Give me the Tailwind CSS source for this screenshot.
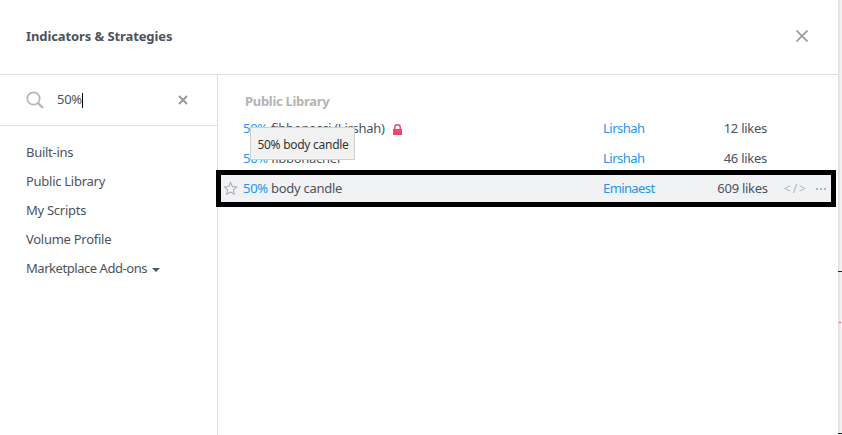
<!DOCTYPE html>
<html lang="en">
  <head>
    <meta charset="UTF-8" />
    <title>Indicators &amp; Strategies</title>
    <script src="https://cdn.jsdelivr.net/npm/@tailwindcss/browser@4"></script>
  </head>
  <body class="bg-white overflow-hidden font-['Noto_Sans',sans-serif] text-[13px] tracking-[-0.27px] text-[#4c525e]">
    <div class="flex h-[435px] w-[842px]">
      <!-- Dialog -->
      <div class="flex flex-col w-[838px]">
        <!-- Header -->
        <div class="flex items-center justify-between h-[75px] shrink-0 pl-[26px] pr-[30px] border-b border-[#e0e0e0]">
          <h1 class="text-[13px] font-bold tracking-[-0.1px] text-[#4c525e] -mt-px">Indicators &amp; Strategies</h1>
          <button class="text-[#9a9a9a] -mt-[2px]">
            <svg width="12" height="12" viewBox="0 0 12 12" fill="none" stroke="currentColor" stroke-width="1.600" class="block"><path d="M.5.500l11 11M11.500.500l-11 11" /></svg>
          </button>
        </div>

        <div class="flex flex-1">
          <!-- Sidebar -->
          <div class="w-[218px] shrink-0 border-r border-[#e0e0e0]">
            <div class="flex items-center h-[51px] pl-[26px] pr-[29px] border-b border-[#e0e0e0]">
              <svg width="18" height="18" viewBox="0 0 18 18" fill="none" stroke="#b8b8b8" class="shrink-0">
                <circle cx="7.500" cy="7.500" r="6.200" stroke-width="1.800" />
                <path d="M12 12l5 5" stroke-width="2.400" />
              </svg>
              <div class="flex items-center flex-1 ml-[13px] text-[#4c525e]">
                50%<span class="w-px h-[15px] bg-black"></span>
              </div>
              <svg width="10" height="10" viewBox="0 0 10 10" fill="none" stroke="#9a9a9a" stroke-width="2"><path d="M1 1l8 8M9 1L1 9" /></svg>
            </div>
            <nav class="flex flex-col pt-[12px] pl-[26px]">
              <a class="h-[29px] leading-[29px]">Built-ins</a>
              <a class="h-[29px] leading-[29px]">Public Library</a>
              <a class="h-[29px] leading-[29px]">My Scripts</a>
              <a class="h-[29px] leading-[29px]">Volume Profile</a>
              <a class="flex items-center h-[29px] tracking-[-0.45px]">
                Marketplace Add-ons
                <span class="ml-[5px] mt-[2px] border-x-[4px] border-x-transparent border-t-[4px] border-t-[#4c525e]"></span>
              </a>
            </nav>
          </div>

          <!-- Results -->
          <div class="relative flex-1 pt-[14px]">
            <div class="h-[25px] leading-[24px] pl-[27px] font-bold tracking-[-0.3px] text-[#b4b4b4]">Public Library</div>

            <div class="flex items-center h-[30px] pl-[25px] pr-[71px]">
              <span class="w-[360px] flex items-center">
                <span class="text-[#2196f3]">50%</span>&nbsp;fibbonacci (Lirshah)
                <svg width="9" height="11" viewBox="0 0 9 11" class="ml-[8px]" fill="#f0476b"><path d="M1 5V3.400a3.500 3.400 0 0 1 7 0V5h1v6H0V5zm1.500 0h4V3.400a2 2 0 0 0-4 0z" /></svg>
              </span>
              <span class="text-[#2196f3] tracking-[-0.5px]">Lirshah</span>
              <span class="ml-auto">12 likes</span>
            </div>
            <div class="flex items-center h-[30px] pl-[25px] pr-[71px]">
              <span class="w-[360px]"><span class="text-[#2196f3]">50%</span> fibbonachei</span>
              <span class="text-[#2196f3] tracking-[-0.5px]">Lirshah</span>
              <span class="ml-auto">46 likes</span>
            </div>

            <!-- Highlighted row -->
            <div class="flex items-center h-[37px] w-[620px] -ml-[2px] -mt-[4px] pr-[5px] border-[5px] border-black bg-[#f0f2f4]">
              <svg width="15" height="15" viewBox="0 0 24 24" fill="none" stroke="#a8acb3" stroke-width="1.700" class="ml-[2px] shrink-0"><path d="M12 2.500l2.900 6.300 6.900.8-5.100 4.700 1.400 6.800-6.100-3.400-6.100 3.400 1.400-6.800L2.200 9.600l6.900-.8z" /></svg>
              <span class="w-[360px] ml-[5px]"><span class="text-[#2196f3]">50%</span> body candle</span>
              <span class="text-[#2196f3] tracking-[-0.6px]">Eminaest</span>
              <span class="ml-auto">609 likes</span>
              <span class="ml-[16px] text-[12px] tracking-[2px] text-[#b2b5ba]">&lt;/&gt;</span>
              <span class="ml-[8px] flex gap-[2px]">
                <i class="w-[2px] h-[2px] bg-[#b2b5ba]"></i><i class="w-[2px] h-[2px] bg-[#b2b5ba]"></i><i class="w-[2px] h-[2px] bg-[#b2b5ba]"></i>
              </span>
            </div>

            <!-- Tooltip -->
            <div class="absolute left-[32px] top-[52px] h-[33px] w-[105px] pt-[2px] pl-px flex items-center justify-center text-[12px] text-[#333] bg-[#f2f2f2] border border-[#cfcfcf]">50% body candle</div>
          </div>
        </div>
      </div>

      <!-- Chart sliver behind the dialog -->
      <div class="relative w-[4px] h-full bg-gradient-to-r from-[#dedede] to-[#f8f8f8]">
        <i class="absolute left-0 top-[271px] w-[4px] h-px bg-[#222]"></i>
        <i class="absolute left-[1px] top-[322px] w-[2px] h-px bg-[#ef5350]"></i>
        <i class="absolute left-0 top-[433px] w-[4px] h-px bg-[#222]"></i>
      </div>
    </div>
  </body>
</html>
